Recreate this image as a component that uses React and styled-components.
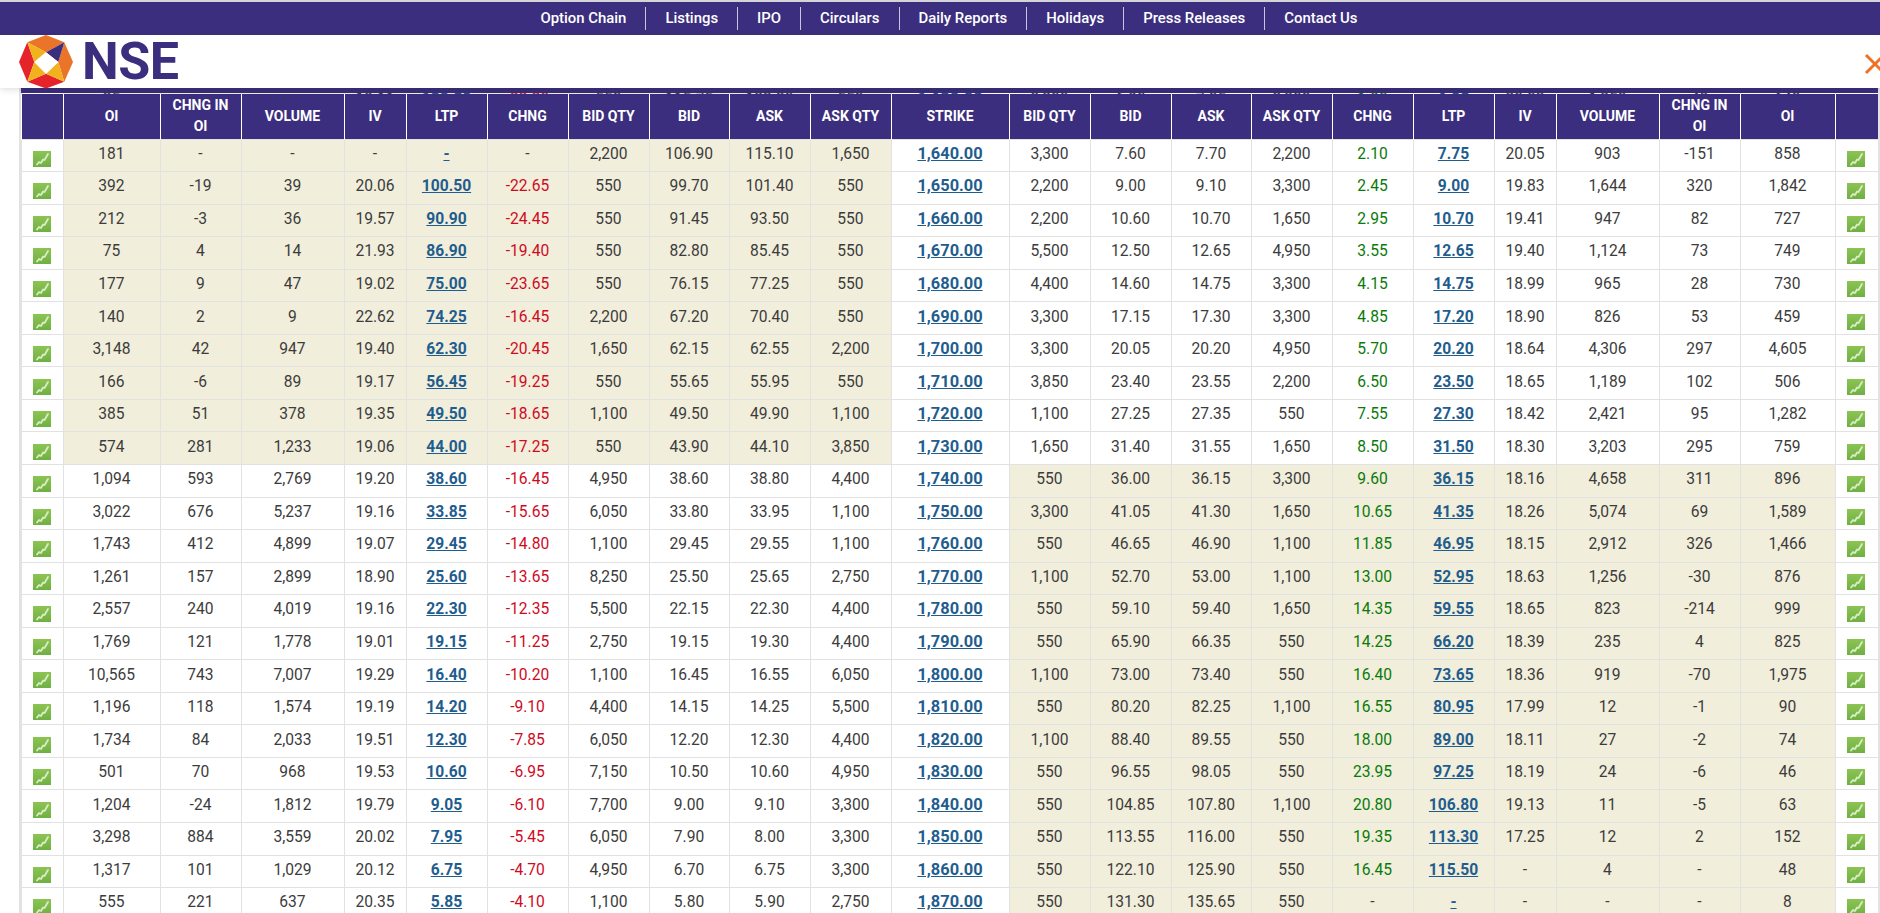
import React from 'react';
import styled, { createGlobalStyle } from 'styled-components';

const GlobalStyle = createGlobalStyle`
  html, body {
    margin: 0;
    height: 913px;
    overflow: hidden;
    background: #fff;
    font-family: Roboto, "Liberation Sans", sans-serif;
  }
`;

const NAVY = '#3b2e7e';
const SHADE = '#f1eedb';
const LINE = '#e2e2e2';
const INK = '#3c3c3c';

const navLinks = ['Option Chain', 'Listings', 'IPO', 'Circulars', 'Daily Reports', 'Holidays', 'Press Releases', 'Contact Us'];

const widths = [41.5, 97, 81, 103, 62, 81, 81, 81, 80, 81, 81, 118, 81, 81, 80, 81, 81, 81, 62, 103, 81, 95, 43.5];

const heads = ['OI', 'CHNG IN OI', 'VOLUME', 'IV', 'LTP', 'CHNG', 'BID QTY', 'BID', 'ASK', 'ASK QTY', 'STRIKE', 'BID QTY', 'BID', 'ASK', 'ASK QTY', 'CHNG', 'LTP', 'IV', 'VOLUME', 'CHNG IN OI', 'OI'];

// strike, calls (oi .. ask qty), puts (bid qty .. oi)
const rows = [
  ['1,640.00', ['181', '-', '-', '-', '-', '-', '2,200', '106.90', '115.10', '1,650'], ['3,300', '7.60', '7.70', '2,200', '2.10', '7.75', '20.05', '903', '-151', '858']],
  ['1,650.00', ['392', '-19', '39', '20.06', '100.50', '-22.65', '550', '99.70', '101.40', '550'], ['2,200', '9.00', '9.10', '3,300', '2.45', '9.00', '19.83', '1,644', '320', '1,842']],
  ['1,660.00', ['212', '-3', '36', '19.57', '90.90', '-24.45', '550', '91.45', '93.50', '550'], ['2,200', '10.60', '10.70', '1,650', '2.95', '10.70', '19.41', '947', '82', '727']],
  ['1,670.00', ['75', '4', '14', '21.93', '86.90', '-19.40', '550', '82.80', '85.45', '550'], ['5,500', '12.50', '12.65', '4,950', '3.55', '12.65', '19.40', '1,124', '73', '749']],
  ['1,680.00', ['177', '9', '47', '19.02', '75.00', '-23.65', '550', '76.15', '77.25', '550'], ['4,400', '14.60', '14.75', '3,300', '4.15', '14.75', '18.99', '965', '28', '730']],
  ['1,690.00', ['140', '2', '9', '22.62', '74.25', '-16.45', '2,200', '67.20', '70.40', '550'], ['3,300', '17.15', '17.30', '3,300', '4.85', '17.20', '18.90', '826', '53', '459']],
  ['1,700.00', ['3,148', '42', '947', '19.40', '62.30', '-20.45', '1,650', '62.15', '62.55', '2,200'], ['3,300', '20.05', '20.20', '4,950', '5.70', '20.20', '18.64', '4,306', '297', '4,605']],
  ['1,710.00', ['166', '-6', '89', '19.17', '56.45', '-19.25', '550', '55.65', '55.95', '550'], ['3,850', '23.40', '23.55', '2,200', '6.50', '23.50', '18.65', '1,189', '102', '506']],
  ['1,720.00', ['385', '51', '378', '19.35', '49.50', '-18.65', '1,100', '49.50', '49.90', '1,100'], ['1,100', '27.25', '27.35', '550', '7.55', '27.30', '18.42', '2,421', '95', '1,282']],
  ['1,730.00', ['574', '281', '1,233', '19.06', '44.00', '-17.25', '550', '43.90', '44.10', '3,850'], ['1,650', '31.40', '31.55', '1,650', '8.50', '31.50', '18.30', '3,203', '295', '759']],
  ['1,740.00', ['1,094', '593', '2,769', '19.20', '38.60', '-16.45', '4,950', '38.60', '38.80', '4,400'], ['550', '36.00', '36.15', '3,300', '9.60', '36.15', '18.16', '4,658', '311', '896']],
  ['1,750.00', ['3,022', '676', '5,237', '19.16', '33.85', '-15.65', '6,050', '33.80', '33.95', '1,100'], ['3,300', '41.05', '41.30', '1,650', '10.65', '41.35', '18.26', '5,074', '69', '1,589']],
  ['1,760.00', ['1,743', '412', '4,899', '19.07', '29.45', '-14.80', '1,100', '29.45', '29.55', '1,100'], ['550', '46.65', '46.90', '1,100', '11.85', '46.95', '18.15', '2,912', '326', '1,466']],
  ['1,770.00', ['1,261', '157', '2,899', '18.90', '25.60', '-13.65', '8,250', '25.50', '25.65', '2,750'], ['1,100', '52.70', '53.00', '1,100', '13.00', '52.95', '18.63', '1,256', '-30', '876']],
  ['1,780.00', ['2,557', '240', '4,019', '19.16', '22.30', '-12.35', '5,500', '22.15', '22.30', '4,400'], ['550', '59.10', '59.40', '1,650', '14.35', '59.55', '18.65', '823', '-214', '999']],
  ['1,790.00', ['1,769', '121', '1,778', '19.01', '19.15', '-11.25', '2,750', '19.15', '19.30', '4,400'], ['550', '65.90', '66.35', '550', '14.25', '66.20', '18.39', '235', '4', '825']],
  ['1,800.00', ['10,565', '743', '7,007', '19.29', '16.40', '-10.20', '1,100', '16.45', '16.55', '6,050'], ['1,100', '73.00', '73.40', '550', '16.40', '73.65', '18.36', '919', '-70', '1,975']],
  ['1,810.00', ['1,196', '118', '1,574', '19.19', '14.20', '-9.10', '4,400', '14.15', '14.25', '5,500'], ['550', '80.20', '82.25', '1,100', '16.55', '80.95', '17.99', '12', '-1', '90']],
  ['1,820.00', ['1,734', '84', '2,033', '19.51', '12.30', '-7.85', '6,050', '12.20', '12.30', '4,400'], ['1,100', '88.40', '89.55', '550', '18.00', '89.00', '18.11', '27', '-2', '74']],
  ['1,830.00', ['501', '70', '968', '19.53', '10.60', '-6.95', '7,150', '10.50', '10.60', '4,950'], ['550', '96.55', '98.05', '550', '23.95', '97.25', '18.19', '24', '-6', '46']],
  ['1,840.00', ['1,204', '-24', '1,812', '19.79', '9.05', '-6.10', '7,700', '9.00', '9.10', '3,300'], ['550', '104.85', '107.80', '1,100', '20.80', '106.80', '19.13', '11', '-5', '63']],
  ['1,850.00', ['3,298', '884', '3,559', '20.02', '7.95', '-5.45', '6,050', '7.90', '8.00', '3,300'], ['550', '113.55', '116.00', '550', '19.35', '113.30', '17.25', '12', '2', '152']],
  ['1,860.00', ['1,317', '101', '1,029', '20.12', '6.75', '-4.70', '4,950', '6.70', '6.75', '3,300'], ['550', '122.10', '125.90', '550', '16.45', '115.50', '-', '4', '-', '48']],
  ['1,870.00', ['555', '221', '637', '20.35', '5.85', '-4.10', '1,100', '5.80', '5.90', '2,750'], ['550', '131.30', '135.65', '550', '-', '-', '-', '-', '-', '8']],
];

const peekRow = ['1,630.00', ['25', '-', '-', '19.11', '120.50', '-22.30', '550', '115.75', '123.30', '550'], ['3,300', '6.90', '7.05', '2,200', '1.90', '6.95', '20.02', '1,250', '48', '640']];

const Page = styled.div`
  height: 913px;
  overflow: hidden;
  border-top: 2px solid #d4d4d8;
  box-sizing: border-box;
`;

const TopNav = styled.nav`
  height: 33px;
  background: ${NAVY};
  display: flex;
  justify-content: center;
  align-items: center;
  padding-left: 18px;
`;

const NavLink = styled.a`
  color: #fff;
  font-size: 14.9px;
  font-weight: 500;
  line-height: 23px;
  padding: 0 19px;
  border-left: 1px solid #c9c6dc;
  &:first-child {
    border-left: 0;
  }
`;

const LogoBar = styled.header`
  position: relative;
  z-index: 2;
  height: 53px;
  background: #fff;
  display: flex;
  align-items: center;
  justify-content: space-between;
  padding-left: 19px;
  box-shadow: 0 2px 6px rgba(0, 0, 0, 0.12);
`;

const Brand = styled.div`
  display: flex;
  align-items: center;
  gap: 9px;
`;

const BrandName = styled.span`
  color: ${NAVY};
  font-size: 52px;
  font-weight: 700;
  line-height: 53px;
  letter-spacing: -0.5px;
`;

const CloseIcon = styled.svg`
  flex: none;
  margin-right: -6px;
  margin-top: 5px;
`;

const Sheet = styled.div`
  margin: 0 0 0 19px;
  border-left: 2px solid ${LINE};
  border-right: 2px solid ${LINE};
  height: 826px;
  overflow: hidden;
`;

const NavyGap = styled.div`
  height: 5px;
  background: ${NAVY};
  margin-left: -2px;
  margin-right: -2px;
`;

const PeekClip = styled.div`
  height: 1px;
  overflow: hidden;
  background: #fff;
`;

const PeekTable = styled.table`
  table-layout: fixed;
  width: 100%;
  border-collapse: collapse;
  margin-top: -9px;
`;

const Table = styled.table`
  table-layout: fixed;
  width: 100%;
  border-collapse: collapse;
  color: ${INK};
`;

const Head = styled.th`
  height: 45px;
  padding: 0 6px;
  box-sizing: border-box;
  background: ${NAVY};
  color: #fff;
  font-size: 14px;
  font-weight: 700;
  line-height: 21px;
  text-align: center;
  border-left: ${(p) => (p.$joined ? '0' : '1px solid #fff')};
  border-right: ${(p) => (p.$joined ? '0' : '1px solid #fff')};
`;

const Row = styled.tr`
  height: 32.55px;
`;

const Cell = styled.td`
  padding: 0 0 3px;
  box-sizing: border-box;
  text-align: center;
  line-height: 18px;
  font-size: 15.6px;
  white-space: nowrap;
  border: 1px solid ${LINE};
  background: ${(p) => (p.$shade ? SHADE : '#fff')};
  color: ${(p) => (p.$tone === 'down' ? '#cf0a1e' : p.$tone === 'up' ? '#0a7a0a' : INK)};
`;

const IconCell = styled.td`
  padding: 7px 1px 0 0;
  box-sizing: border-box;
  text-align: center;
  line-height: 0;
  border: 1px solid ${LINE};
  background: #fff;
`;

const QuoteLink = styled.a`
  color: #1f5d8e;
  font-size: ${(p) => (p.$strike ? '16.4px' : '15.6px')};
  font-weight: 700;
  text-decoration: underline;
`;

const NseLogo = () => (
  <svg width="54" height="54" viewBox="0 0 54 54">
    <polygon points="8.3,7.2 27,0 45.3,7.2 27,17.2" fill="#ea7428" />
    <polygon points="45.3,7.2 54,27 45.3,46.8 39.3,27" fill="#ea7428" />
    <polygon points="8.3,7.2 0,27 8.3,46.8 15.3,27" fill="#e4232b" />
    <polygon points="8.3,46.8 27,53.5 45.3,46.8 27,38.8" fill="#e4232b" />
    <polygon points="8.3,7.2 27,17.2 15.3,27" fill="#f2b21e" />
    <polygon points="45.3,46.8 27,38.8 39.3,27" fill="#f2b21e" />
    <polygon points="8.3,46.8 15.3,27 27,38.8" fill="#f2b21e" />
    <polygon points="45.3,7.2 39.3,27 27,17.2" fill="#3b2e7e" />
    <polygon points="27,17.2 39.3,27 27,38.8 15.3,27" fill="#fff" />
  </svg>
);

const ChartIcon = () => (
  <svg width="18" height="16" viewBox="0 0 18 16">
    <defs>
      <linearGradient id="chart-green" x1="0" y1="0" x2="0" y2="1">
        <stop offset="0" stopColor="#8cc453" />
        <stop offset="1" stopColor="#6fb043" />
      </linearGradient>
    </defs>
    <rect width="18" height="16" fill="url(#chart-green)" />
    <path d="M4 13.5 L6 11 L8 12 L10 8.5 L11.5 9 L15 3" fill="none" stroke="#d9ecc3" strokeWidth="1.8" strokeLinecap="round" strokeLinejoin="round" />
  </svg>
);

const Cols = () => (
  <colgroup>
    {widths.map((w, i) => (
      <col key={i} width={w} />
    ))}
  </colgroup>
);

const tone = (value, col) => {
  if (col !== 'chng' || value === '-') return undefined;
  return value.startsWith('-') ? 'down' : 'up';
};

const cellsFor = (values, chngIdx, ltpIdx, shade) =>
  values.map((v, i) =>
    i === ltpIdx ? (
      <Cell key={i} $shade={shade}>
        <QuoteLink>{v}</QuoteLink>
      </Cell>
    ) : (
      <Cell key={i} $shade={shade} $tone={tone(v, i === chngIdx ? 'chng' : '')}>
        {v}
      </Cell>
    )
  );

const ChainRow = ({ strike, calls, puts }) => {
  const itm = parseFloat(strike.replace(',', '')) <= 1730;
  return (
    <Row>
      <IconCell>
        <ChartIcon />
      </IconCell>
      {cellsFor(calls, 5, 4, itm)}
      <Cell>
        <QuoteLink $strike>{strike}</QuoteLink>
      </Cell>
      {cellsFor(puts, 4, 5, !itm)}
      <IconCell>
        <ChartIcon />
      </IconCell>
    </Row>
  );
};

const App = () => {
  return (
    <Page>
      <GlobalStyle />
      <TopNav>
        {navLinks.map((l) => (
          <NavLink key={l}>{l}</NavLink>
        ))}
      </TopNav>
      <LogoBar>
        <Brand>
          <NseLogo />
          <BrandName>NSE</BrandName>
        </Brand>
        <CloseIcon width="22" height="22" viewBox="0 0 22 22">
          <path d="M2 2 L20 20 M20 2 L2 20" stroke="#ec7324" strokeWidth="3" />
        </CloseIcon>
      </LogoBar>
      <Sheet>
        <NavyGap />
        <PeekClip>
          <PeekTable>
            <Cols />
            <tbody>
              <ChainRow strike={peekRow[0]} calls={peekRow[1]} puts={peekRow[2]} />
            </tbody>
          </PeekTable>
        </PeekClip>
        <Table>
          <Cols />
          <thead>
            <tr>
              <Head />
              {heads.map((h, i) => (
                <Head key={i} $joined={i === 0}>
                  {h}
                </Head>
              ))}
              <Head />
            </tr>
          </thead>
          <tbody>
            {rows.map((r) => (
              <ChainRow key={r[0]} strike={r[0]} calls={r[1]} puts={r[2]} />
            ))}
          </tbody>
        </Table>
      </Sheet>
    </Page>
  );
};

export default App;
